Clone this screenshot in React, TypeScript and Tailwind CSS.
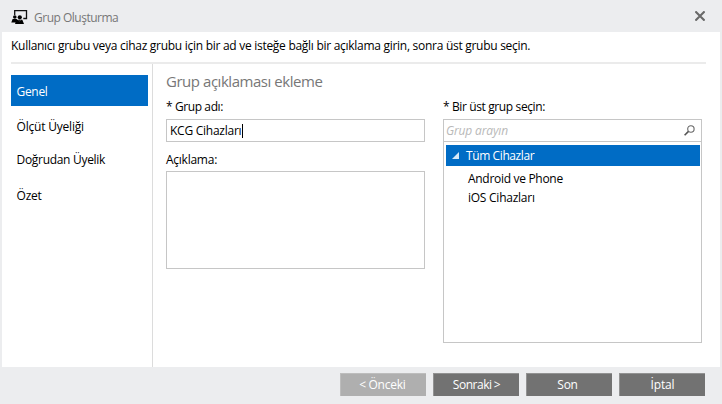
const steps = [
  { label: 'Genel', box: 'h-[31px] bg-[#006cc5] text-white tracking-[-0.3px]' },
  { label: 'Ölçüt Üyeliği', box: 'mt-[4px] h-[31px] tracking-[-0.2px]' },
  { label: 'Doğrudan Üyelik', box: 'mt-[2px] h-[31px] tracking-[-0.3px]' },
  { label: 'Özet', box: 'mt-[5px] h-[31px] tracking-[-0.2px]' },
];

const buttons = [
  { label: '< Önceki', tone: 'bg-[#afafaf] border-[#bdbdbd] tracking-[-0.2px] [word-spacing:-0.5px] pr-[2px]' },
  { label: 'Sonraki >', tone: 'bg-[#727272] border-[#929292] tracking-[-0.45px] [word-spacing:-0.5px]' },
  { label: 'Son', tone: 'bg-[#727272] border-[#929292] tracking-[-0.3px] pr-[4px]' },
  { label: 'İptal', tone: 'bg-[#727272] border-[#929292] tracking-[-0.15px]' },
];

function GroupIcon() {
  return (
    <svg className="ml-[11px] mt-[9px] shrink-0" width="17" height="16" viewBox="0 0 17 16">
      <path d="M3.7 6V1.6h11.8v7.9h-3.2" fill="none" stroke="#111" strokeWidth="1.3" />
      <circle cx="3.8" cy="8" r="1.8" />
      <circle cx="8.8" cy="8.3" r="2.1" />
      <path d="M.3 13.4 1.6 10h4.2l1 3.4zM4 15l1.5-4.2h5.8L13 15z" />
      <path d="M6.5 10.4 8.7 12l2.1-1.6" stroke="#888" strokeWidth=".5" fill="none" />
    </svg>
  );
}

export default function App() {
  return (
    <div className="flex h-[404px] w-[722px] flex-col overflow-hidden bg-[#ecedef] font-['Open_Sans','Noto_Sans',sans-serif] text-[12px] leading-[16px] whitespace-nowrap text-black">
      <header className="flex h-[32px] shrink-0">
        <GroupIcon />
        <h1 className="ml-[6px] mt-[10px] text-[12px] tracking-[-0.5px] text-[#777]">Grup Oluşturma</h1>
        <svg className="mt-[11px] mr-[17px] ml-auto" width="10" height="10" viewBox="0 0 10 10">
          <path d="M.4.4l9.2 9.2M9.6.4.4 9.6" stroke="#696969" strokeWidth="2.1" />
        </svg>
      </header>
      <main className="mr-[2px] ml-[2px] flex h-[335px] shrink-0 flex-col bg-white">
        <div className="mr-[14px] ml-[9px] h-[32px] shrink-0 border-b-2 border-[#ebebeb] pt-[6px] tracking-[-0.28px]">
          Kullanıcı grubu veya cihaz grubu için bir ad ve isteğe bağlı bir açıklama girin, sonra üst grubu seçin.
        </div>
        <div className="flex flex-1">
          <nav className="w-[151px] border-r border-[#dcdcdc] pt-[11px] pr-[4px] pl-[9px]">
            {steps.map((s) => (
              <div key={s.label} className={`flex items-center pt-[2px] pl-[5.5px] ${s.box}`}>{s.label}</div>
            ))}
          </nav>
          <section className="ml-[13px] w-[259px]">
            <h2 className="mt-[7px] h-[20px] text-[15px] leading-[20px] tracking-[-0.46px] text-[#777]">Grup açıklaması ekleme</h2>
            <div className="mt-[8px] h-[16px] tracking-[-0.4px]">* Grup adı:</div>
            <div className="mt-[4px] flex h-[23px] items-center border border-[#c6c6c6] pl-[3px] tracking-[-0.25px]">
              KCG Cihazları<span className="ml-px h-[14px] w-px bg-black" />
            </div>
            <div className="mt-[10px] h-[16px] tracking-[-0.25px]">Açıklama:</div>
            <div className="mt-[3px] h-[98px] border border-[#c6c6c6]" />
          </section>
          <section className="ml-[18px] w-[259px] pt-[35px]">
            <div className="h-[16px] tracking-[-0.38px]">* Bir üst grup seçin:</div>
            <div className="mt-[4px] h-[224px] border border-[#c6c6c6]">
              <div className="flex h-[22px] items-center border-b border-[#c6c6c6] pr-[6px] pl-[2px] text-[#b9b9b9] italic">
                <span className="tracking-[-0.15px]">Grup arayın</span>
                <svg className="ml-auto" width="11" height="11" viewBox="0 0 11 11">
                  <circle cx="6.9" cy="4" r="3.2" fill="none" stroke="#666" strokeWidth="1.1" />
                  <path d="M4.5 6.4.6 10.3" stroke="#555" strokeWidth="1.6" />
                </svg>
              </div>
              <div className="mt-[3px] mr-px ml-[2px] flex h-[21px] items-center bg-[#006cc5] text-white">
                <svg className="ml-[6px] mr-[7px]" width="7" height="7" viewBox="0 0 7 7">
                  <path d="M7 0v7H0z" fill="#d5e8f8" />
                </svg>
                <span className="pt-px tracking-[-0.4px]">Tüm Cihazlar</span>
              </div>
              <div className="mt-[4px] ml-[24px] h-[19px] pt-px tracking-[-0.3px]">Android ve Phone</div>
              <div className="ml-[24px] h-[19px] pt-px tracking-[-0.25px]">iOS Cihazları</div>
            </div>
          </section>
        </div>
      </main>
      <footer className="mr-[17px] flex justify-end gap-[7px] pt-[6px]">
        {buttons.map((b) => (
          <button key={b.label} className={`h-[23px] w-[86px] border-t border-l text-white ${b.tone}`}>{b.label}</button>
        ))}
      </footer>
    </div>
  );
}
